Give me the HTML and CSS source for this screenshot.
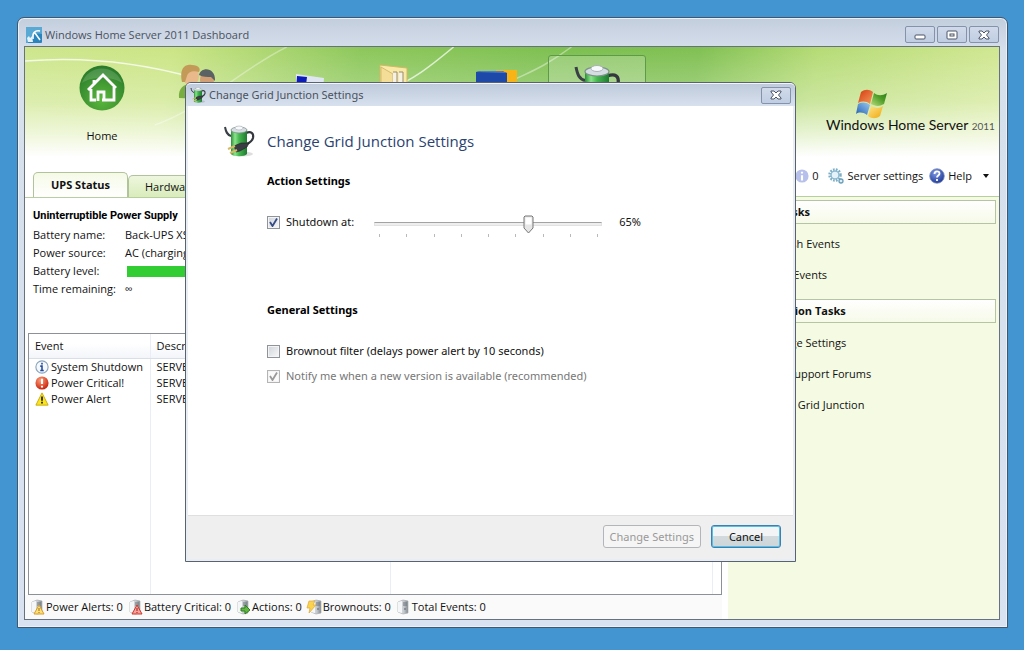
FILE: index.html
```html
<!DOCTYPE html>
<html lang="en">
<head>
<meta charset="utf-8">
<title>Windows Home Server 2011 Dashboard</title>
<link rel="stylesheet" href="styles.css">
</head>
<body>
<svg class="defs" aria-hidden="true">
  <defs>
    <linearGradient id="cell" x1="0" x2="1" y1="0" y2="0">
      <stop offset="0" stop-color="#2b8f3a"/><stop offset=".25" stop-color="#8be38a"/><stop offset=".5" stop-color="#46b850"/><stop offset="1" stop-color="#1f7a31"/>
    </linearGradient>
    <linearGradient id="box" x1="0" x2="1" y1="0" y2="0">
      <stop offset="0" stop-color="#f1f3f4"/><stop offset=".6" stop-color="#c3c8cc"/><stop offset="1" stop-color="#80878d"/>
    </linearGradient>
    <linearGradient id="pane-red" x1="0" x2="1" y1="0" y2="1">
      <stop offset="0" stop-color="#d33a10"/><stop offset="1" stop-color="#f59a5a"/>
    </linearGradient>
    <linearGradient id="pane-green" x1="0" x2="1" y1="1" y2="0">
      <stop offset="0" stop-color="#b9dc7c"/><stop offset=".6" stop-color="#4c9c26"/><stop offset="1" stop-color="#2f7d1c"/>
    </linearGradient>
    <linearGradient id="pane-blue" x1="1" x2="0" y1="0" y2="1">
      <stop offset="0" stop-color="#9cc9ee"/><stop offset="1" stop-color="#1f5fb4"/>
    </linearGradient>
    <linearGradient id="pane-gold" x1="0" x2="1" y1="0" y2="1">
      <stop offset="0" stop-color="#fde58a"/><stop offset="1" stop-color="#f0a80c"/>
    </linearGradient>
    <radialGradient id="red" cx=".4" cy=".3" r=".7">
      <stop offset="0" stop-color="#ffa07c"/><stop offset="1" stop-color="#c8240c"/>
    </radialGradient>
    <radialGradient id="blue" cx=".4" cy=".3" r=".8">
      <stop offset="0" stop-color="#7f9ae6"/><stop offset="1" stop-color="#152f8c"/>
    </radialGradient>
    <radialGradient id="orb" cx=".5" cy=".75" r=".7">
      <stop offset="0" stop-color="#5cb83c"/><stop offset="1" stop-color="#2b7d2b"/>
    </radialGradient>
    <symbol id="battery" viewBox="0 0 32 32">
      <ellipse cx="19" cy="29" rx="11" ry="2.500" fill="#000" opacity=".13"/>
      <path d="M2 2c1 5 2 8 6 9" fill="none" stroke="#3a4046" stroke-width="2"/>
      <path d="M23 8c5-2 8 0 7 5-1 4-4 5-8 7" fill="none" stroke="#34383e" stroke-width="2.200"/>
      <path d="M8 5v24c2 3 14 3 16 0V5z" fill="url(#cell)"/>
      <ellipse cx="16" cy="5" rx="8" ry="3" fill="#d5dce2" stroke="#7f9389" stroke-width=".8"/>
      <ellipse cx="16" cy="3" rx="4" ry="2" fill="#f7f9fb" stroke="#a6adb5" stroke-width=".6"/>
      <path d="M11 21l7-3h8l-2 4-7 4-4 1z" fill="#3b3d44" stroke="#222" stroke-width=".6"/>
      <path d="M12 21l-7 3M14 25l-7 3" stroke="#d9b968" stroke-width="2"/>
    </symbol>
    <symbol id="server" viewBox="0 0 16 16">
      <path d="M3 3l5-2 5 1v12l-5 1-5-2z" fill="url(#box)" stroke="#a6acb0" stroke-width=".7"/>
      <path d="M3 3l4-1v12l-4-1z" fill="#f5f6f7"/>
      <path d="M8 4h4M8 6h4" stroke="#6d757b" stroke-width="1"/>
      <circle cx="10" cy="10" r="1" fill="#7a8186"/>
    </symbol>
  </defs>
</svg>

<main class="window">
  <header class="titlebar">
    <svg class="icon16" viewBox="0 0 16 16" aria-hidden="true">
      <rect width="16" height="16" rx="1" fill="#2a85bd"/><path d="M0 0h16v7C9 5 4 8 2 16H0z" fill="#58a9d4"/>
      <path d="M7 12C6 6 9 3 14 4M9 6l5 7" fill="none" stroke="#fff" stroke-width="1.500"/>
      <path d="M1 11l2-2 1 2 2-2 1 6H2z" fill="#e6f3fb"/>
    </svg>
    <h1 class="titlebar-text">Windows Home Server 2011 Dashboard</h1>
    <div class="captions">
      <button class="caption" aria-label="Minimize"><svg viewBox="0 0 14 10"><rect x="2" y="5" width="10" height="4" rx="1" fill="#fff" stroke="#4b5566"/></svg></button>
      <button class="caption" aria-label="Maximize"><svg viewBox="0 0 14 10"><rect x="2" y="1" width="10" height="8" rx="1" fill="#fff" stroke="#4b5566"/><rect x="5" y="4" width="4" height="2" fill="#fff" stroke="#4b5566"/></svg></button>
      <button class="caption" aria-label="Close"><svg viewBox="0 0 14 10"><path d="M2 1h3l2 2 2-2h3v1L9.500 5 12 8v1H9L7 7 5 9H2V8l2.500-3L2 2z" fill="#fff" stroke="#4b5566"/></svg></button>
    </div>
  </header>

  <div class="client">
    <div class="banner">
      <svg class="banner-art" viewBox="0 0 975 126" preserveAspectRatio="none" aria-hidden="true">
        <g fill="none" stroke="#fff">
          <path d="M0 14C50 10 110 14 170 31" stroke-width="1.500" opacity=".75"/>
          <path d="M130 78C180 60 220 20 262 0" stroke-width="1.500" opacity=".35"/>
          <path d="M360 45C390 32 405 20 429 0" stroke-width="1.500" opacity=".7"/>
          <path d="M485 35C505 25 520 20 547 0" stroke-width="1.500" opacity=".4"/>
        </g>
      </svg>
      <div class="banner-content">
        <nav class="nav">
          <button class="nav-item">
            <svg class="nav-icon" viewBox="0 0 48 48" aria-hidden="true">
              <circle cx="24" cy="24" r="22.500" fill="url(#orb)"/>
              <path d="M4 19a21 21 0 0 1 40 0C34 12 14 12 4 19z" fill="#fff" opacity=".15"/>
              <path d="M10 26L25 11l13 13M16 16v5M13 25v11h5M24 36h12V23M20 37V28h6v8" fill="none" stroke="#fff" stroke-width="2.800"/>
            </svg>
            <span>Home</span>
          </button>
          <button class="nav-item" aria-label="Users">
            <svg class="nav-icon" viewBox="0 0 48 48" aria-hidden="true">
              <path d="M2 34c-1-10 5-14 12-14s11 6 11 15z" fill="#78ad42"/>
              <ellipse cx="14" cy="12" rx="8" ry="10" fill="#e9b98c"/><path d="M5 18C2 3 9 0 15 1c7 0 9 4 7 7-6-2-11 0-12 4l-2 6z" fill="#c39a58"/>
              <ellipse cx="30" cy="16" rx="7" ry="9" fill="#d29e74"/><path d="M22 11c2-9 17-8 16 6l-4-4c-4 0-8 0-12-2z" fill="#5b6264"/>
            </svg>
          </button>
          <button class="nav-item" aria-label="Computers">
            <svg class="nav-icon" viewBox="0 0 48 48" aria-hidden="true"><path d="M20 10l28 4-2 22-26-4z" fill="#dfe6f2"/><path d="M21 12l10 1-2 16-9-2z" fill="#0d1cb8"/></svg>
          </button>
          <button class="nav-item" aria-label="Server folders">
            <svg class="nav-icon" viewBox="0 0 48 48" aria-hidden="true"><path d="M5 1l27 3v40H5z" fill="#f8e9a6" stroke="#d3b762"/><path d="M6 3l12 7v34l-12-5z" fill="#f3dd97" stroke="#c9a95c" stroke-width=".7"/><path d="M18 8h4v35h-4M24 8h4v35h-4" fill="#f4f1e8" stroke="#9b8b69"/></svg>
          </button>
          <button class="nav-item" aria-label="Add-ins">
            <svg class="nav-icon" viewBox="0 0 48 48" aria-hidden="true"><path d="M22 6h21v28H22z" fill="#f8b416"/><path d="M2 8l5-1h21l5 2v32H2z" fill="#1e49a8"/><path d="M2 8l5-1h21l5 2z" fill="#4d7ed1"/></svg>
          </button>
          <button class="nav-item nav-item-on" aria-label="Grid Junction">
            <svg class="nav-icon" aria-hidden="true"><use href="#battery"/></svg>
          </button>
        </nav>
        <div class="brand">
          <svg class="flag" viewBox="0 0 32 30" aria-hidden="true">
            <path d="M5 3c4-3 8-3 12 0l-3 12c-4-3-8-3-12-1z" fill="url(#pane-red)"/>
            <path d="M18 4c4 3 8 3 13 0l-3 11c-5 3-9 2-13 0z" fill="url(#pane-green)"/>
            <path d="M2 15c4-2 8-2 12 1l-3 10c-4-3-8-3-11-1z" fill="url(#pane-blue)"/>
            <path d="M15 17c4 2 8 3 12 0l-3 10c-4 3-8 3-12 0z" fill="url(#pane-gold)"/>
          </svg>
          <p class="brand-name">Windows Home Server <span>2011</span></p>
        </div>
      </div>
    </div>

    <div class="columns">
      <section class="left">
        <div class="tabs" role="tablist">
          <button class="tab tab-on" role="tab" aria-selected="true">UPS Status</button>
          <button class="tab" role="tab">Hardware</button>
        </div>
        <div class="status">
          <h2 class="strong device">Uninterruptible Power Supply</h2>
          <dl class="facts">
            <dt>Battery name:</dt><dd>Back-UPS XS</dd>
            <dt>Power source:</dt><dd>AC (charging)</dd>
            <dt>Battery level:</dt><dd><progress class="level" value="100" max="100" aria-label="Battery level"></progress></dd>
            <dt>Time remaining:</dt><dd>∞</dd>
          </dl>
        </div>
        <div class="events">
          <table>
            <thead><tr><th class="c-event">Event</th><th class="c-desc">Description</th><th></th></tr></thead>
            <tbody>
              <tr><td><span class="cell"><svg class="icon14" viewBox="0 0 16 16" aria-hidden="true"><circle cx="8" cy="8" r="7" fill="#f5f9fd" stroke="#8ba5bd" stroke-width="1.300"/><path d="M8 3v2M6 7h2v5M6 12h4" fill="none" stroke="#234b9b" stroke-width="1.800"/></svg>System Shutdown</span></td><td>SERVER</td><td></td></tr>
              <tr><td><span class="cell"><svg class="icon14" viewBox="0 0 16 16" aria-hidden="true"><circle cx="8" cy="8" r="7.500" fill="url(#red)"/><path d="M8 3v6M8 11v2" stroke="#fff" stroke-width="2.400"/></svg>Power Critical!</span></td><td>SERVER</td><td></td></tr>
              <tr><td><span class="cell"><svg class="icon14" viewBox="0 0 16 16" aria-hidden="true"><path d="M8 1l7 14H1z" fill="#fbe51c" stroke="#c3a500" stroke-linejoin="round"/><path d="M8 5v5M8 11v2" stroke="#222" stroke-width="2"/></svg>Power Alert</span></td><td>SERVER</td><td></td></tr>
              <tr class="filler"><td></td><td></td><td></td></tr>
            </tbody>
          </table>
        </div>
        <footer class="counts">
          <span><svg class="icon16" viewBox="0 0 16 16" aria-hidden="true"><use href="#server"/><path d="M10 6l5 9H5z" fill="#fbe07a" stroke="#d99d2c"/><path d="M10 9v3M10 13v1" stroke="#a06a10"/></svg>Power Alerts: 0</span>
          <span><svg class="icon16" viewBox="0 0 16 16" aria-hidden="true"><use href="#server"/><path d="M10 6l5 9H5z" fill="#f4a29b" stroke="#cf352c"/><path d="M10 9v3M10 13v1" stroke="#a31710"/></svg>Battery Critical: 0</span>
          <span><svg class="icon16" viewBox="0 0 16 16" aria-hidden="true"><use href="#server"/><path d="M6 9h4V6l5 5-5 4v-3H6z" fill="#62b83f" stroke="#2c7d22"/></svg>Actions: 0</span>
          <span><svg class="icon16" viewBox="0 0 16 16" aria-hidden="true"><use href="#server" x="2"/><path d="M3 2h6L7 6h3l-7 8 1-5H1z" fill="#fbd34f" stroke="#dda63a" stroke-width=".7"/></svg>Brownouts: 0</span>
          <span><svg class="icon16" aria-hidden="true"><use href="#server"/></svg>Total Events: 0</span>
        </footer>
      </section>

      <section class="right">
        <div class="tools">
          <button class="tool"><svg class="icon14" viewBox="0 0 16 16" aria-hidden="true"><circle cx="8" cy="8" r="7.500" fill="#b7c0ea"/><path d="M8 3v2M8 7v6" stroke="#fff" stroke-width="2.400"/></svg><span>0</span></button>
          <button class="tool tool-settings"><svg class="icon16" viewBox="0 0 16 16" aria-hidden="true"><circle cx="7" cy="7" r="5.500" fill="none" stroke="#7fadc4" stroke-width="2.500" stroke-dasharray="1.700 1.200"/><circle cx="7" cy="7" r="4" fill="#e5f2f9" stroke="#8ab9d2" stroke-width="1.500"/><circle cx="13" cy="13" r="2" fill="#dceef6" stroke="#6b9fb8" stroke-width="1.300"/></svg>Server settings</button>
          <button class="tool"><svg class="icon16" viewBox="0 0 16 16" aria-hidden="true"><circle cx="8" cy="8" r="7.300" fill="url(#blue)" stroke="#8292be" stroke-width=".8"/><path d="M5.500 6c0-3.500 5-3.500 5-.5 0 2-2.500 2-2.500 4M8 11v2" fill="none" stroke="#fff" stroke-width="1.800"/></svg>Help<i class="arrow"></i></button>
        </div>
        <aside class="tasks">
          <h2 class="group">Events Tasks</h2>
          <ul>
            <li><a href="#">Refresh Events</a></li>
            <li><a href="#">Clear Events</a></li>
          </ul>
          <h2 class="group">Grid Junction Tasks</h2>
          <ul>
            <li><a href="#">Change Settings</a></li>
            <li><a href="#">Visit Support Forums</a></li>
            <li><a href="#">About Grid Junction</a></li>
          </ul>
        </aside>
      </section>
    </div>
  </div>

  <section class="dialog" role="dialog" aria-labelledby="dialog-title">
    <header class="dialog-bar">
      <svg class="icon16" aria-hidden="true"><use href="#battery"/></svg>
      <span class="dialog-name">Change Grid Junction Settings</span>
      <button class="caption" aria-label="Close dialog"><svg viewBox="0 0 14 10"><path d="M2 1h3l2 2 2-2h3v1L9.500 5 12 8v1H9L7 7 5 9H2V8l2.500-3L2 2z" fill="#fff" stroke="#4b5566"/></svg></button>
    </header>
    <div class="dialog-body">
      <div class="dialog-head">
        <svg class="icon32" aria-hidden="true"><use href="#battery"/></svg>
        <h2 id="dialog-title">Change Grid Junction Settings</h2>
      </div>
      <fieldset class="settings">
        <legend class="strong">Action Settings</legend>
        <div class="shutdown">
          <label class="check"><input type="checkbox" checked>Shutdown at:</label>
          <div class="slider">
            <input type="range" min="10" max="90" value="65" aria-label="Shutdown battery level">
            <div class="ticks"><i></i><i></i><i></i><i></i><i></i><i></i><i></i><i></i><i></i></div>
          </div>
          <output>65%</output>
        </div>
      </fieldset>
      <fieldset class="settings general">
        <legend class="strong">General Settings</legend>
        <label class="check"><input type="checkbox">Brownout filter (delays power alert by 10 seconds)</label>
        <label class="check check-off"><input type="checkbox" checked disabled>Notify me when a new version is available (recommended)</label>
      </fieldset>
    </div>
    <footer class="dialog-foot">
      <button class="btn" disabled>Change Settings</button>
      <button class="btn btn-main">Cancel</button>
    </footer>
  </section>
</main>
</body>
</html>
```
FILE: styles.css
```css
* { box-sizing: border-box; }

body {
  margin: 0;
  min-height: 100vh;
  padding: 17px 16px 22px 17px;
  display: flex;
  background: #4295d1;
  font: 11px/16px "Open Sans", "Noto Sans", sans-serif;
  color: #111;
}

h1, h2, p, ul, dl, dd { margin: 0; padding: 0; }
ul { list-style: none; }
button { font: inherit; color: inherit; background: none; border: 0; padding: 0; }
a { color: inherit; text-decoration: none; }
svg { flex: none; }

.defs { position: absolute; width: 0; height: 0; }
.icon14 { width: 14px; height: 14px; }
.icon16 { width: 16px; height: 16px; }
.icon32 { width: 32px; height: 32px; }
.strong { font-size: 11px; line-height: 16px; font-weight: 700; color: #000; }
.device { font-family: Roboto, "Open Sans", sans-serif; }

/* Main window */
.window {
  position: relative;
  flex: 1;
  display: flex;
  flex-direction: column;
  padding: 0 7px 7px 6px;
  border: 1px solid #44566a;
  border-radius: 7px 7px 0 0;
  background: linear-gradient(#c3cedd, #d6dfec 32px, #d8e2f0);
  box-shadow: inset 0 0 0 1px #e9f0f8;
}

.titlebar { display: flex; align-items: center; height: 28px; padding: 5px 0 0 2px; }
.titlebar-text { flex: 1; margin-left: 3px; font-size: 11px; font-weight: 400; color: #4a525e; }
.captions { display: flex; gap: 2px; margin-right: 1px; }

.caption {
  display: flex;
  align-items: center;
  justify-content: center;
  width: 30px;
  height: 17px;
  border: 1px solid #8492ab;
  border-radius: 2px;
  background: linear-gradient(#d0daea, #c0cde2);
}
.caption svg { width: 14px; height: 10px; }

.client {
  flex: 1;
  display: flex;
  flex-direction: column;
  border: 1px solid #67727e;
  background: #fff;
}

/* Banner */
.banner {
  display: grid;
  height: 110px;
  background:
    linear-gradient(rgba(255, 255, 255, 0), rgba(255, 255, 255, .3) 50%, rgba(255, 255, 255, .7) 80%, #fff),
    linear-gradient(100deg, #cde68c 0%, #cbe584 15%, #8cc75a 34%, #7cbf4f 55%, #80c052 68%, #b5db75 80%, #d3e894 100%);
}
.banner-art, .banner-content { grid-area: 1 / 1; }
.banner-art { width: 100%; height: 126px; }
.banner-content { display: flex; justify-content: space-between; }

.nav { display: flex; gap: 1px; padding: 8px 0 0 28px; }
.nav-item {
  display: flex;
  flex-direction: column;
  align-items: center;
  gap: 16px;
  width: 98px;
  height: 100px;
  padding-top: 8px;
  border: 1px solid transparent;
  border-radius: 3px;
}
.nav-item-on { border-color: #5f9a4a; background: rgba(255, 255, 255, .2); }
.nav-icon { width: 48px; height: 48px; }

.brand { width: 173px; padding-top: 42px; }
.flag { display: block; width: 32px; height: 30px; margin-left: 30px; }
.brand-name {
  font-family: Lato, "Open Sans", sans-serif;
  font-size: 14px;
  line-height: 12px;
  white-space: nowrap;
  color: #111;
}
.brand-name span { font-size: 10px; color: #555; }

/* Columns */
.columns { flex: 1; display: grid; grid-template-columns: 703px 1fr; }
.left { display: flex; flex-direction: column; min-width: 0; padding-top: 15px; }

.tabs { display: flex; align-items: flex-end; padding-left: 8px; border-bottom: 1px solid #b7ce9f; }
.tab {
  height: 22px;
  padding: 0 16px;
  border: 1px solid #b0c39b;
  border-bottom: 0;
  border-radius: 5px 5px 0 0;
  background: linear-gradient(#eef7de, #d9ecbb);
}
.tab-on {
  width: 95px;
  height: 25px;
  padding: 0;
  font-size: 11px;
  font-weight: 700;
  background: linear-gradient(#f5fae6, #fff);
}

.status { padding: 10px 8px 0; }
.facts { display: grid; grid-template-columns: 92px 1fr; grid-auto-rows: 18px; align-items: center; padding-top: 2px; }
.level { display: block; width: 200px; height: 11px; margin-left: 2px; appearance: none; border: 0; }
.level::-webkit-progress-bar { background: #e6e6e6; }
.level::-webkit-progress-value { background: #32cd32; }

.events {
  flex: 1;
  display: flex;
  margin: 35px 6px 0 3px;
  padding-right: 8px;
  border: 1px solid #8c9097;
}
table { flex: 1; width: 100%; border-collapse: collapse; table-layout: fixed; }
thead { background: linear-gradient(#fff 40%, #f3f5f9); }
th, td { padding: 0 0 0 6px; border-right: 1px solid #e8eef5; text-align: left; font-weight: 400; }
th { height: 24px; border-bottom: 1px solid #d8dfe8; }
td { height: 16px; }
.c-event { width: 121px; }
.c-desc { width: 240px; }
.filler td { height: auto; }
.cell { display: flex; align-items: center; gap: 2px; }

.counts { display: flex; gap: 4px; height: 24px; padding-left: 4px; align-items: center; background: #fafafa; margin-right: 6px; }
.counts span { display: flex; align-items: center; gap: 1px; }

/* Right side */
.right { display: flex; flex-direction: column; }
.tools { display: flex; align-items: center; justify-content: flex-end; gap: 6px; height: 39px; padding: 0 10px 1px 0; }
.tool { display: flex; align-items: center; gap: 3px; }
.tool-settings { margin-left: 4px; }
.arrow { margin-left: 8px; border: 3px solid transparent; border-top: 4px solid #111; border-bottom: 0; }

.tasks { flex: 1; padding: 3px 3px 0 5px; border-top: 1px solid #b7ce9f; background: #f5fae3; }
.group {
  height: 24px;
  padding-left: 6px;
  border: 1px solid #b5c4a2;
  background: linear-gradient(#fff, #f6fae8);
  font-size: 11px;
  line-height: 22px;
}
.tasks ul { padding: 4px 0 9px 31px; }
.tasks li { height: 31px; line-height: 31px; }

/* Dialog */
.dialog {
  position: absolute;
  top: 64px;
  left: 167px;
  right: 211px;
  height: 480px;
  display: flex;
  flex-direction: column;
  padding: 0 2px 2px;
  border: 1px solid #59636f;
  border-radius: 6px 6px 0 0;
  background: #e9eef5;
  font-family: "Noto Sans", "Open Sans", sans-serif;
}
.dialog-bar {
  display: flex;
  align-items: center;
  height: 23px;
  margin: 0 -2px;
  padding: 0 4px;
  border-top: 1px solid #f2f6fb;
  border-radius: 5px 5px 0 0;
  background: linear-gradient(#bfcadb, #d7e1ee);
}
.dialog-name { flex: 1; margin-left: 3px; color: #4a525e; }
.dialog-body { flex: 1; padding: 19px 35px 0; background: #fff; }
.dialog-head { display: flex; align-items: center; gap: 12px; }
.dialog-head h2 { font: 400 15px/20px "Open Sans", "Noto Sans", sans-serif; color: #2b4370; }

.settings { border: 0; margin: 0 0 0 44px; padding: 0; }
.settings legend { padding: 16px 0 0; }
.shutdown { display: flex; align-items: flex-start; padding-top: 25px; height: 64px; }
.check { display: flex; align-items: center; gap: 6px; height: 16px; }
.check-off { color: #777; }
.check input {
  appearance: none;
  width: 13px;
  height: 13px;
  margin: 0;
  border: 1px solid #8e9499;
  background: linear-gradient(135deg, #cfd4da, #f8f8f8);
  box-shadow: inset 0 0 0 1px #f4f4f4;
}
.check input:checked {
  background: url("data:image/svg+xml,%3Csvg xmlns='http://www.w3.org/2000/svg' viewBox='0 0 11 11'%3E%3Cpath d='M2 5l2.500 4L9 1.500' fill='none' stroke='%23364a86' stroke-width='1.800'/%3E%3C/svg%3E"), linear-gradient(135deg, #cfd4da, #f8f8f8);
}
.check input:disabled {
  border-color: #b4b4b4;
  background: url("data:image/svg+xml,%3Csvg xmlns='http://www.w3.org/2000/svg' viewBox='0 0 11 11'%3E%3Cpath d='M2 5l2.500 4L9 1.500' fill='none' stroke='%23999' stroke-width='1.800'/%3E%3C/svg%3E"), #fafafa;
}

.slider { width: 228px; margin: 0 17px 0 20px; }
.slider input { appearance: none; display: block; width: 100%; height: 20px; margin: 0; background: none; }
.slider input::-webkit-slider-runnable-track { height: 4px; border: 1px solid #e2e2e2; border-top-color: #a3a3a3; background: #eee; }
.slider input::-webkit-slider-thumb {
  appearance: none;
  width: 11px;
  height: 19px;
  margin-top: -8px;
  background: url("data:image/svg+xml,%3Csvg xmlns='http://www.w3.org/2000/svg' viewBox='0 0 11 19'%3E%3Cpath d='M2 1h7l1 1v11l-4.500 5L1 13V2z' fill='%23e6e6e6' stroke='%23777'/%3E%3Cpath d='M2.500 2.500h6v7h-6z' fill='%23fff'/%3E%3C/svg%3E");
}
.ticks { display: flex; justify-content: space-between; padding: 0 4px 0 5px; }
.ticks i { width: 1px; height: 3px; background: #b9b9b9; }

.general legend { padding-top: 49px; margin-bottom: 25px; }
.general .check + .check { margin-top: 9px; }

.dialog-foot {
  display: flex;
  align-items: center;
  justify-content: flex-end;
  gap: 10px;
  height: 44px;
  padding: 0 12px 2px 0;
  border-top: 1px solid #dfdfdf;
  background: #efefef;
}
.btn {
  height: 23px;
  padding: 0 6px;
  border: 1px solid #b3b6b9;
  border-radius: 3px;
  background: #f5f5f5;
  line-height: 20px;
}
.btn:disabled { color: #999; }
.btn-main {
  width: 70px;
  border-color: #3c7fb1;
  background: linear-gradient(#f2f4f5 50%, #d3dadd 50%, #ced6d9);
  box-shadow: inset 0 0 0 1px #59bfe2;
}
```
